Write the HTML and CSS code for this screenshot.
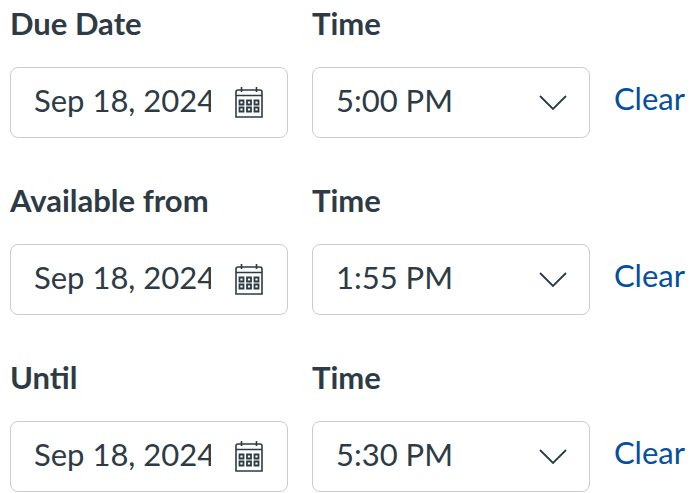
FILE: index.html
```
<!DOCTYPE html>
<html lang="en">
	<head>
		<meta charset="utf-8" />
		<title>Assignment Dates</title>
		<link rel="stylesheet" href="styles.css">
	</head>
	<body>
		<svg class="symbols" aria-hidden="true">
			<symbol id="calendar" viewBox="0 0 28 32">
				<path d="M1 30V5Q1 3 3 3H25Q27 3 27 5V30Z M1 8.5H27" fill="none" stroke="currentColor" stroke-width="1.6" />
				<path d="M6.5 0V5 M21.5 0V5" fill="none" stroke="currentColor" stroke-width="1.6" />
				<path d="M4.5 13.5h4v4h-4z M12 13.5h4v4h-4z M19.5 13.5h4v4h-4z M4.5 20.5h4v4h-4z M12 20.5h4v4h-4z M19.5 20.5h4v4h-4z" fill="none" stroke="currentColor" stroke-width="1.8" />
			</symbol>
			<symbol id="arrow" viewBox="0 0 28 16">
				<path d="M1 1L14 14L27 1" fill="none" stroke="currentColor" stroke-width="1.8" />
			</symbol>
		</svg>

		<form class="dates">
			<div class="row">
				<label for="dueDate">Due Date</label>
				<label for="dueTime">Time</label>
				<div class="field date">
					<input id="dueDate" type="text" value="Sep 18, 2024" />
					<svg class="calendar"><use href="#calendar" /></svg>
				</div>
				<div class="field time">
					<select id="dueTime"><option>5:00 PM</option></select>
					<svg class="arrow"><use href="#arrow" /></svg>
				</div>
				<a class="clear" href="#">Clear</a>
			</div>

			<div class="row">
				<label for="fromDate">Available from</label>
				<label for="fromTime">Time</label>
				<div class="field date">
					<input id="fromDate" type="text" value="Sep 18, 2024" />
					<svg class="calendar"><use href="#calendar" /></svg>
				</div>
				<div class="field time">
					<select id="fromTime"><option>1:55 PM</option></select>
					<svg class="arrow"><use href="#arrow" /></svg>
				</div>
				<a class="clear" href="#">Clear</a>
			</div>

			<div class="row">
				<label for="untilDate">Until</label>
				<label for="untilTime">Time</label>
				<div class="field date">
					<input id="untilDate" type="text" value="Sep 18, 2024" />
					<svg class="calendar"><use href="#calendar" /></svg>
				</div>
				<div class="field time">
					<select id="untilTime"><option>5:30 PM</option></select>
					<svg class="arrow"><use href="#arrow" /></svg>
				</div>
				<a class="clear" href="#">Clear</a>
			</div>
		</form>
	</body>
</html>
```
FILE: styles.css
```
* {
	box-sizing: border-box;
}
body {
	margin: 0;
	background: #fff;
	color: #2d3b45;
	font-family: Lato, sans-serif;
	font-size: 31px;
	line-height: 36px;
}
.symbols {
	display: none;
}

.dates {
	display: flex;
	flex-direction: column;
	gap: 44px;
	padding: 5px 6px 0 10px;
}
.row {
	display: grid;
	grid-template-columns: 1fr 1fr auto;
	gap: 26px 24px;
}
label {
	font-weight: bold;
}

.field {
	min-width: 0;
	height: 71px;
	border: 1px solid #c7cdd1;
	border-radius: 8px;
}
.date {
	grid-column: 1;
	display: flex;
	align-items: center;
	gap: 24px;
	padding: 0 24px 0 23px;
}
.time {
	display: grid;
	align-items: center;
}
input,
select {
	margin: 0;
	padding: 0 0 6px;
	border: 0;
	outline: 0;
	background: none;
	color: inherit;
	font: inherit;
}
input {
	flex: 1;
	min-width: 0;
}
select {
	grid-area: 1 / 1;
	width: 100%;
	height: 100%;
	padding: 0 64px 6px 23px;
	appearance: none;
}
.calendar {
	flex: none;
	width: 28px;
	height: 32px;
}
.arrow {
	grid-area: 1 / 1;
	justify-self: end;
	width: 28px;
	height: 16px;
	margin-right: 22px;
	pointer-events: none;
}

.clear {
	align-self: center;
	padding-bottom: 10px;
	color: #04509e;
	text-decoration: none;
}
```
